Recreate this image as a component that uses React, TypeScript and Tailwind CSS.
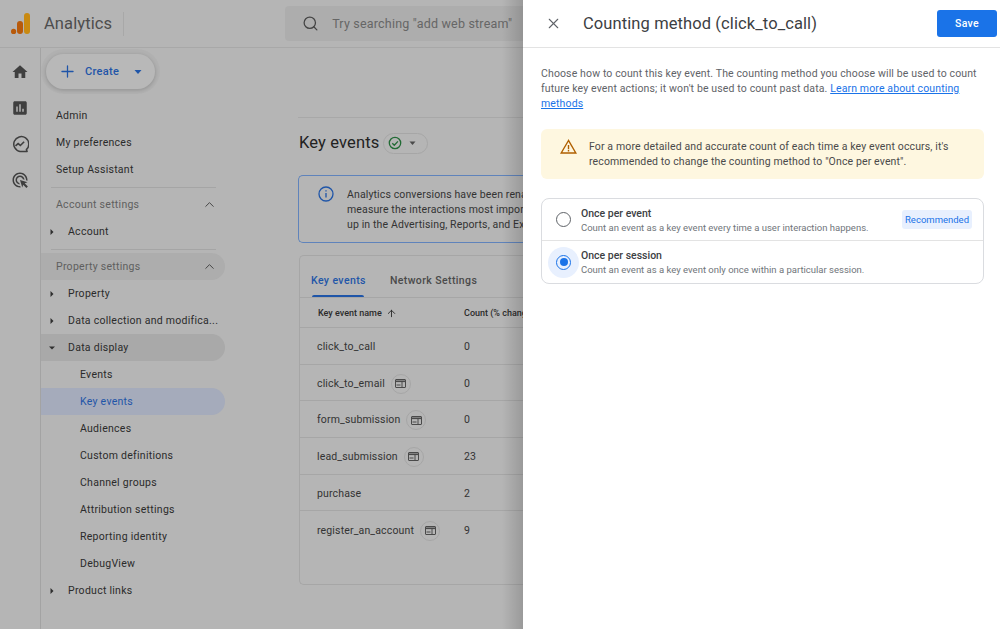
import { ArrowUp, ChevronUp, Plus, Search, X } from 'lucide-react';

const sans = 'font-["Roboto","Liberation_Sans",sans-serif]';

function MaterialIcon({ d, size, className }: { d: string; size: number; className?: string }) {
  return (
    <svg width={size} height={size} viewBox="0 0 24 24" fill="currentColor" className={className}>
      <path d={d} />
    </svg>
  );
}

function Caret({ open }: { open?: boolean }) {
  return (
    <svg width="8" height="8" viewBox="0 0 8 8" fill="#2f2f2f" className="shrink-0">
      {open ? <path d="M1 2.5h6L4 5.5z" /> : <path d="M2.5 1v6L5.5 4z" />}
    </svg>
  );
}

function Logo() {
  return (
    <svg width="19" height="22" viewBox="0 0 19 22">
      <rect x="13" y="0" width="6" height="21" rx="3" fill="#c98a12" />
      <rect x="6" y="8" width="6" height="13" rx="3" fill="#b85a0b" />
      <circle cx="2.6" cy="18.4" r="2.6" fill="#b85a0b" />
    </svg>
  );
}

function RailIcons() {
  return (
    <div className="w-[41px] shrink-0 border-r border-[#a3a3a3] flex flex-col items-center gap-[18px] pt-[15px] text-[#3f3f3f]">
      <MaterialIcon size={18} d="M10 20v-6h4v6h5v-8h3L12 3 2 12h3v8z" />
      <MaterialIcon size={18} d="M19 3H5c-1.1 0-2 .9-2 2v14c0 1.1.9 2 2 2h14c1.1 0 2-.9 2-2V5c0-1.1-.9-2-2-2zM9 17H7v-7h2v7zm4 0h-2V7h2v10zm4 0h-2v-4h2v4z" />
      <svg width="18" height="18" viewBox="0 0 24 24" fill="none" stroke="currentColor" strokeWidth="2">
        <path d="M20.5 19.5A10 10 0 1 0 12 22h9.5z" strokeLinejoin="round" />
        <path d="M6 14.5l3.5-3 3 2.5L17.5 9" strokeWidth="2.2" />
      </svg>
      <MaterialIcon
        size={18}
        d="M11.71 17.99C8.53 17.84 6 15.22 6 12c0-3.31 2.69-6 6-6 3.22 0 5.84 2.53 5.99 5.71l-2.1-.63C15.48 9.31 13.89 8 12 8c-2.21 0-4 1.79-4 4 0 1.89 1.31 3.48 3.08 3.89l.63 2.1zM22 12c0 .3-.01.6-.04.9l-1.97-.59c.01-.1.01-.21.01-.31 0-4.42-3.58-8-8-8s-8 3.58-8 8 3.58 8 8 8c.1 0 .21 0 .31-.01l.59 1.97c-.3.03-.6.04-.9.04-5.52 0-10-4.48-10-10S6.48 2 12 2s10 4.48 10 10zm-3.77 4.26L22 15l-10-3 3 10 1.26-3.77 4.27 4.27 1.98-1.98-4.28-4.26z"
      />
    </div>
  );
}

function NavRow({ label, indent = 0, open, tone = 'text-[#2b2b2b]' }: { label: string; indent?: number; open?: boolean; tone?: string }) {
  return (
    <div className={`h-[27px] flex items-center rounded-r-full text-[10.5px] tracking-[0.27px] ${tone}`}>
      {indent === 0 && <span className="pl-[15px]">{label}</span>}
      {indent === 1 && (
        <>
          <span className="pl-[7px] w-[27px] shrink-0">
            <Caret open={open} />
          </span>
          <span className="whitespace-nowrap">{label}</span>
        </>
      )}
      {indent === 2 && <span className="pl-[39px]">{label}</span>}
    </div>
  );
}

function SectionRow({ label, tone = '' }: { label: string; tone?: string }) {
  return (
    <div className={`h-[27px] flex items-center justify-between pl-[15px] pr-[8px] rounded-r-full text-[10.5px] tracking-[0.27px] text-[#5f5f5f] ${tone}`}>
      <span>{label}</span>
      <ChevronUp size={15} strokeWidth={1.5} className="text-[#3f3f3f]" />
    </div>
  );
}

function Sidebar() {
  return (
    <div className="w-[184px] shrink-0">
      <div className="mt-[6px] ml-[5px] w-[109px] h-[35px] rounded-full bg-[#b8b8b8] shadow-[0_1px_3px_1px_rgba(0,0,0,0.12),0_0_0_5px_rgba(0,0,0,0.025)] flex items-center pl-[12px] text-[#1f55a8]">
        <Plus size={19} strokeWidth={1.6} />
        <span className="ml-[8px] mt-[2px] text-[11px] font-medium tracking-[0.3px]">Create</span>
        <svg width="8" height="8" viewBox="0 0 8 8" fill="currentColor" className="ml-[15px]">
          <path d="M0.5 2h7L4 6z" />
        </svg>
      </div>
      <div className="mt-[13px]">
        <NavRow label="Admin" />
        <NavRow label="My preferences" />
        <NavRow label="Setup Assistant" />
        <div className="h-[8px] flex items-center pl-[10px] pr-[9px]">
          <div className="h-px w-full bg-[#a5a5a5]" />
        </div>
        <SectionRow label="Account settings" />
        <NavRow label="Account" indent={1} />
        <div className="h-[8px] flex items-center pl-[10px] pr-[9px]">
          <div className="h-px w-full bg-[#a5a5a5]" />
        </div>
        <SectionRow label="Property settings" tone="bg-[#adadad]" />
        <NavRow label="Property" indent={1} />
        <NavRow label="Data collection and modifica..." indent={1} />
        <NavRow label="Data display" indent={1} open tone="text-[#2b2b2b] bg-[#a9a9a9]" />
        <NavRow label="Events" indent={2} />
        <NavRow label="Key events" indent={2} tone="bg-[#a5abbb] text-[#1f55a8]" />
        <NavRow label="Audiences" indent={2} />
        <NavRow label="Custom definitions" indent={2} />
        <NavRow label="Channel groups" indent={2} />
        <NavRow label="Attribution settings" indent={2} />
        <NavRow label="Reporting identity" indent={2} />
        <NavRow label="DebugView" indent={2} />
        <NavRow label="Product links" indent={1} />
      </div>
    </div>
  );
}

const events = [
  { name: 'click_to_call', count: '0', badge: false },
  { name: 'click_to_email', count: '0', badge: true },
  { name: 'form_submission', count: '0', badge: true },
  { name: 'lead_submission', count: '23', badge: true },
  { name: 'purchase', count: '2', badge: false },
  { name: 'register_an_account', count: '9', badge: true },
];

function EventRow({ name, count, badge }: { name: string; count: string; badge: boolean }) {
  return (
    <div className="h-[36.7px] pt-[2px] flex items-center border-b border-[#a6a6a6] last:border-b-0 text-[10.5px] tracking-[0.15px] text-[#333]">
      <div className="w-[164px] pl-[17px] flex items-center shrink-0">
        <span>{name}</span>
        {badge && (
          <span className="ml-[6px] w-[20px] h-[20px] rounded-full border border-[#a6a6a6] flex items-center justify-center">
            <svg width="11" height="9" viewBox="0 0 11 9" fill="none" stroke="#4a4a4a">
              <rect x="0.5" y="0.5" width="10" height="8" rx="0.5" />
              <path d="M0.5 2.3h10" strokeWidth="1.6" />
              <path d="M7 2.5v6M1.5 6h4" />
            </svg>
          </span>
        )}
      </div>
      <span>{count}</span>
    </div>
  );
}

function MainContent() {
  return (
    <div className="flex-1 min-w-0 pl-[73px]">
      <div className="mt-[69px] h-px bg-[#a8a8a8]" />
      <div className="mt-[11px] h-[28px] flex items-center gap-[3px] pl-px">
        <span className="text-[16.5px] text-[#222] tracking-[0.15px]">Key events</span>
        <div className="w-[45px] h-[21px] rounded-full border border-[#a6a6a6] flex items-center pl-[4px] gap-[7px]">
          <svg width="14" height="14" viewBox="0 0 14 14" fill="none" stroke="#226b35" strokeWidth="1.3">
            <circle cx="7" cy="7" r="5.7" />
            <path d="M4.3 7.2l2 2 3.6-3.8" />
          </svg>
          <svg width="7" height="5" viewBox="0 0 7 5" fill="#4a4a4a">
            <path d="M0.5 0.5h6L3.5 4z" />
          </svg>
        </div>
      </div>
      <div className="mt-[18px] h-[68px] rounded-l-[5px] border border-r-0 border-[#5f83bb] flex pl-[19px] pt-[10px]">
        <svg width="16" height="16" viewBox="0 0 16 16" fill="none" stroke="#1f55a8" strokeWidth="1.3" className="shrink-0">
          <circle cx="8" cy="8" r="7" />
          <path d="M8 7v4.5M8 4.2v1.4" />
        </svg>
        <div className="ml-[13px] mt-px text-[10.5px] leading-[15px] tracking-[0.13px] text-[#333] whitespace-nowrap">
          <p>Analytics conversions have been renamed to key events, which you can use to</p>
          <p>measure the interactions most important to your business. Key events show</p>
          <p>up in the Advertising, Reports, and Explore sections.</p>
        </div>
      </div>
      <div className="mt-[12px] ml-px h-[330px] rounded-l-[5px] border border-r-0 border-[#a6a6a6]">
        <div className="h-[42px] flex items-end border-b border-[#a6a6a6] pl-[11px] gap-[24px] text-[10.5px] font-medium tracking-[0.4px]">
          <div className="h-[41px] flex flex-col items-center justify-between pt-[18px] text-[#1f55a8]">
            <span className="leading-[14px]">Key events</span>
            <span className="h-[2px] w-[52px] bg-[#1f55a8] rounded-t-sm" />
          </div>
          <span className="h-[41px] pt-[18px] leading-[14px] text-[#4a4a4a]">Network Settings</span>
        </div>
        <div className="h-[30px] pt-[2px] flex items-center border-b border-[#a6a6a6] text-[9px] font-medium text-[#2b2b2b]">
          <div className="w-[164px] pl-[18px] flex items-center gap-[4px] shrink-0">
            <span>Key event name</span>
            <ArrowUp size={11} strokeWidth={2} />
          </div>
          <span className="whitespace-nowrap">Count (% change)</span>
        </div>
        {events.map((e) => (
          <EventRow key={e.name} {...e} />
        ))}
      </div>
    </div>
  );
}

function Backdrop() {
  return (
    <div className="h-[629px] bg-[#b5b5b5] flex flex-col">
      <header className="h-[48px] shrink-0 border-b border-[#a8a8a8] flex items-center">
        <div className="ml-[11px] flex items-center">
          <Logo />
          <span className="ml-[14px] mt-[2px] text-[16.5px] text-[#4d4d4d] tracking-[0.1px]">Analytics</span>
          <span className="ml-[11px] h-[24px] w-px bg-[#a8a8a8]" />
        </div>
        <div className="ml-[161px] flex-1 h-[35px] bg-[#adadad] rounded-l-[4px] flex items-center pl-[17px] text-[#666]">
          <Search size={17} strokeWidth={1.8} className="text-[#444]" />
          <span className="ml-[13px] mt-[2px] text-[12.5px] tracking-[0.2px] whitespace-nowrap">Try searching "add web stream"</span>
        </div>
      </header>
      <div className="flex-1 flex min-h-0">
        <RailIcons />
        <Sidebar />
        <MainContent />
      </div>
    </div>
  );
}

function CountingPanel() {
  return (
    <aside className="absolute top-0 right-0 bottom-0 w-[477px] bg-white">
      <div className="absolute top-0 bottom-0 right-full w-[21px] bg-gradient-to-r from-black/0 to-black/15" />
      <div className="h-[48px] border-b border-[#e3e3e3] flex items-center pl-[22px] pr-[3px]">
        <X size={17} strokeWidth={1.5} className="text-[#5f6368]" />
        <h1 className="ml-[21px] mt-[2px] text-[16.5px] text-[#3c4043] tracking-[0.1px]">Counting method (click_to_call)</h1>
        <button className="ml-auto w-[60px] h-[27px] rounded-[3px] bg-[#1a73e8] text-white text-[10.5px] font-medium tracking-[0.3px]">
          Save
        </button>
      </div>
      <div className="pl-[18px] pr-[16px] pt-[18px]">
        <p className="text-[10.5px] leading-[15px] tracking-[0.13px] text-[#5f6368]">
          Choose how to count this key event. The counting method you choose will be used to count future key event actions; it won't be used to count past data.{' '}
          <a className="text-[#1a73e8] underline">Learn more about counting methods</a>
        </p>
        <div className="mt-[18px] h-[50px] rounded-[6px] bg-[#fef7e0] flex items-start pl-[19px] pt-[10px]">
          <svg width="17" height="15" viewBox="0 0 17 15" fill="none" stroke="#b06000" strokeWidth="1.4" className="shrink-0">
            <path d="M8.5 1.5L1.2 14h14.6z" />
            <path d="M8.5 6v4M8.5 10.8v1.6" />
          </svg>
          <p className="ml-[12px] text-[10.5px] leading-[15px] tracking-[0.13px] text-[#4a4a4a]">
            For a more detailed and accurate count of each time a key event occurs, it's
            <br />
            recommended to change the counting method to "Once per event".
          </p>
        </div>
        <div className="mt-[19px] rounded-[8px] border border-[#dadce0]">
          <div className="h-[42px] flex items-center border-b border-[#e3e3e3] pl-[14px] pr-[11px]">
            <span className="w-[15px] h-[15px] rounded-full border-[1.5px] border-[#5f6368] shrink-0" />
            <div className="ml-[10px] pt-[2px]">
              <p className="text-[10.5px] leading-[14px] font-medium text-[#3c4043]">Once per event</p>
              <p className="text-[9.5px] leading-[13px] text-[#70757a]">
                Count an event as a key event every time a user interaction happens.
              </p>
            </div>
            <span className="ml-auto h-[19px] px-[3px] rounded-[3px] bg-[#e8f0fe] text-[#1a73e8] text-[9.5px] leading-[19px]">
              Recommended
            </span>
          </div>
          <div className="h-[42px] flex items-center pl-[6px]">
            <span className="w-[31px] h-[31px] rounded-full bg-[#e8f0fe] flex items-center justify-center shrink-0">
              <span className="w-[15px] h-[15px] rounded-full border-[1.5px] border-[#1a73e8] flex items-center justify-center">
                <span className="w-[8px] h-[8px] rounded-full bg-[#1a73e8]" />
              </span>
            </span>
            <div className="ml-[2px] pt-[1px]">
              <p className="text-[10.5px] leading-[14px] font-medium text-[#3c4043]">Once per session</p>
              <p className="text-[9.5px] leading-[13px] text-[#70757a]">
                Count an event as a key event only once within a particular session.
              </p>
            </div>
          </div>
        </div>
      </div>
    </aside>
  );
}

export default function App() {
  return (
    <div className={`relative w-[1000px] h-[629px] overflow-hidden ${sans}`}>
      <Backdrop />
      <CountingPanel />
    </div>
  );
}
